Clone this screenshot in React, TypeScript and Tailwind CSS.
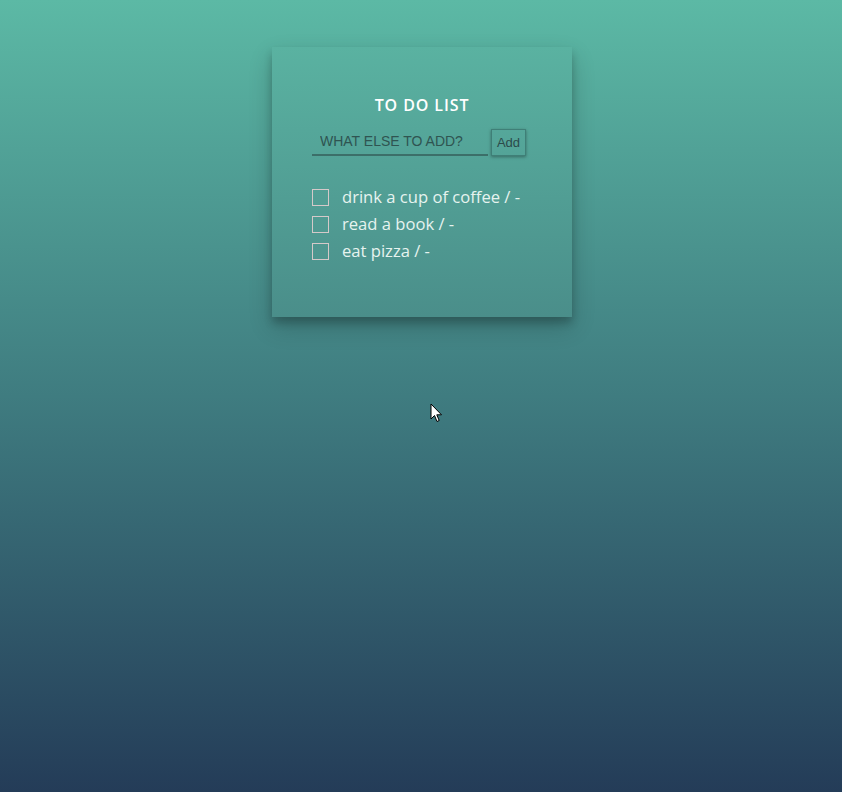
import React from "react";

export default function App() {
  return (
    <div className="relative w-full h-[792px] overflow-hidden bg-[linear-gradient(to_bottom,#5cb9a5_0%,#3f7c80_50%,#243c58_100%)]">
      <div className="flex justify-center pt-[47px] pl-[2px]">
        <div className="w-[300px] h-[270px] bg-[linear-gradient(to_bottom,#5ab2a1,#4a8e8a)] shadow-[0_10px_22px_rgba(0,0,0,0.2),0_6px_8px_rgba(0,0,0,0.2)] flex flex-col pt-[48px] pl-[40px]" style={{ fontFamily: "'Open Sans', sans-serif" }}>
          <h1 className="w-[220px] text-center text-white text-[16px] font-semibold tracking-[0.9px] leading-[20px]">TO DO LIST</h1>
          <div className="flex items-end mt-[14px]">
            <input
              placeholder="WHAT ELSE TO ADD?"
              className="w-[176px] h-[27px] bg-transparent border-0 border-b-2 border-[#3c6f69] pl-[8px] pr-[4px] pt-0 pb-[2px] text-[14px] text-[#2c4f4d] placeholder:text-[#2f5451] outline-none"
              style={{ fontFamily: "'Liberation Sans', Arial, sans-serif" }}
            />
            <button
              className="ml-[3px] w-[35px] h-[27px] border border-[#3f7f77] shadow-[0_1px_3px_rgba(0,0,0,0.35)] text-[13px] text-[#2c4a4a] bg-transparent"
              style={{ fontFamily: "'Liberation Sans', Arial, sans-serif" }}
            >
              Add
            </button>
          </div>
          <ul className="mt-[33px] flex flex-col gap-[11px]">
            {["drink a cup of coffee / -", "read a book / -", "eat pizza / -"].map((t) => (
              <li key={t} className="flex items-center h-[16px]">
                <span className="w-[17px] h-[17px] border border-[#d5c9c9] shrink-0" />
                <span className="ml-[13px] text-[16.6px] text-[#e6f3ef] leading-[16px] whitespace-nowrap">{t}</span>
              </li>
            ))}
          </ul>
        </div>
      </div>
      <svg className="absolute left-[430px] top-[403px]" width="13" height="20" viewBox="0 0 13 20">
        <path d="M1 1 L1 16 L4.5 12.5 L7 18.5 L9.2 17.5 L6.8 11.8 L11.5 11.8 Z" fill="#fff" stroke="#000" strokeWidth="1" strokeLinejoin="round" />
      </svg>
    </div>
  );
}
